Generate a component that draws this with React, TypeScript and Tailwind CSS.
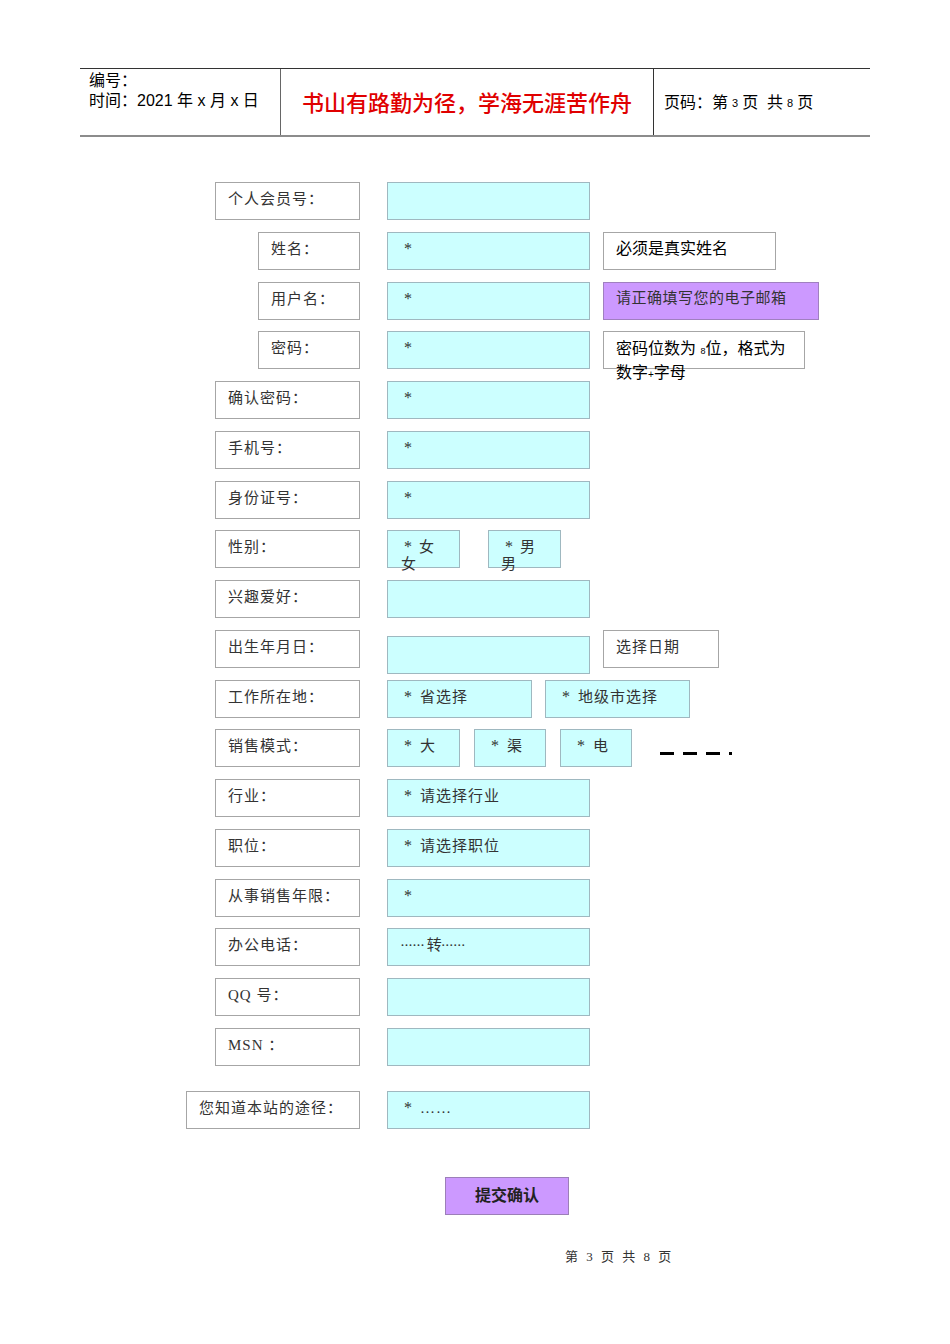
import { ReactNode } from 'react';

const serif = "font-['Liberation_Serif','Noto_Sans_CJK_SC',serif]";
const sans = "font-['Liberation_Sans','Noto_Sans_CJK_SC',sans-serif]";

function Label({ text, w = 'w-[145px]' }: { text: string; w?: string }) {
  return (
    <div className="flex w-[174px] shrink-0 justify-end">
      <div className={`${w} h-[38px] border border-[#a6a6a6] bg-white pl-3 pt-[6px] text-[15px] leading-[20px] tracking-[1px] text-[#333] ${serif}`}>
        {text}
      </div>
    </div>
  );
}

function Star() {
  return <span className="mr-[7px] text-[16px]">*</span>;
}

function Field({ children, w = 'w-[203px]', mt = '' }: { children?: ReactNode; w?: string; mt?: string }) {
  return (
    <div className={`${w} ${mt} h-[38px] shrink-0 border border-[#9fb8c0] bg-[#ccffff] pl-4 pt-[6px] text-[15px] leading-[20px] tracking-[1px] text-[#333] ${serif}`}>
      {children}
    </div>
  );
}

function Row({ children, className = '' }: { children: ReactNode; className?: string }) {
  return <div className={`flex h-[38px] items-start gap-[27px] ${className}`}>{children}</div>;
}

export default function App() {
  return (
    <div className="min-h-[1344px] w-[950px] bg-white">
      {/* header table */}
      <div className="pt-[68px] pl-[80px]">
        <div className="flex h-[69px] w-[790px] border-t border-[#333] border-b-2 border-b-[#8c8c8c]">
          <div className={`w-[201px] border-r border-[#666] pl-[9px] pt-[2px] text-[16px] leading-[20px] text-black ${sans}`}>
            <div>编号：</div>
            <div>时间：2021 年 x 月 x 日</div>
          </div>
          <div className={`flex w-[373px] items-center justify-center border-r border-[#333] pt-[2px] text-[22px] font-medium text-[#e00000] ${sans}`}>
            书山有路勤为径，学海无涯苦作舟
          </div>
          <div className={`flex items-center pl-[10px] pt-[2px] text-[16px] text-black ${sans}`}>
            页码：第<span className="mx-[4px] text-[11px]">3</span>页&nbsp;&nbsp;共<span className="mx-[4px] text-[11px]">8</span>页
          </div>
        </div>
      </div>

      {/* form */}
      <div className="flex flex-col gap-[11.75px] pt-[45px] pl-[186px]">
        <Row>
          <Label text="个人会员号：" />
          <Field />
        </Row>
        <Row>
          <Label text="姓名：" w="w-[102px]" />
          <Field><Star /></Field>
          <div className={`ml-[-14px] h-[38px] w-[173px] border border-[#a6a6a6] pl-3 pt-[6px] text-[16px] leading-[20px] text-black ${sans}`}>
            必须是真实姓名
          </div>
        </Row>
        <Row>
          <Label text="用户名：" w="w-[102px]" />
          <Field><Star /></Field>
          <div className={`ml-[-14px] h-[38px] w-[216px] border border-[#a080c0] bg-[#cc99ff] pl-3 pt-[5px] text-[15px] leading-[20px] tracking-[0.5px] text-[#333] ${sans}`}>
            请正确填写您的电子邮箱
          </div>
        </Row>
        <Row>
          <Label text="密码：" w="w-[102px]" />
          <Field><Star /></Field>
          <div className={`ml-[-14px] h-[38px] w-[202px] border border-[#a6a6a6] pl-3 pt-[6px] text-[16px] leading-[21px] text-black ${sans}`}>
            密码位数为 <span className="text-[9px]">8</span>位，格式为
            <br />
            数字<span className="text-[10px]">+</span>字母
          </div>
        </Row>
        <Row>
          <Label text="确认密码：" />
          <Field><Star /></Field>
        </Row>
        <Row>
          <Label text="手机号：" />
          <Field><Star /></Field>
        </Row>
        <Row>
          <Label text="身份证号：" />
          <Field><Star /></Field>
        </Row>
        <Row>
          <Label text="性别：" />
          <div className="flex gap-[28px]">
            <div className={`relative h-[38px] w-[73px] border border-[#9fb8c0] bg-[#ccffff] pl-4 pt-[6px] text-[15px] leading-[20px] text-[#333] ${serif}`}>
              <Star />女
              <span className="absolute left-[13px] top-[23px]">女</span>
            </div>
            <div className={`relative h-[38px] w-[73px] border border-[#9fb8c0] bg-[#ccffff] pl-4 pt-[6px] text-[15px] leading-[20px] text-[#333] ${serif}`}>
              <Star />男
              <span className="absolute left-[12px] top-[23px]">男</span>
            </div>
          </div>
        </Row>
        <Row>
          <Label text="兴趣爱好：" />
          <Field />
        </Row>
        <Row>
          <Label text="出生年月日：" />
          <Field mt="mt-[6px]" />
          <div className={`ml-[-14px] h-[38px] w-[116px] border border-[#a6a6a6] pl-3 pt-[6px] text-[15px] leading-[20px] tracking-[1px] text-[#333] ${serif}`}>
            选择日期
          </div>
        </Row>
        <Row>
          <Label text="工作所在地：" />
          <div className="flex gap-[13px]">
            <Field w="w-[145px]"><Star />省选择</Field>
            <Field w="w-[145px]"><Star />地级市选择</Field>
          </div>
        </Row>
        <Row>
          <Label text="销售模式：" />
          <div className="flex items-start gap-[14px]">
            <Field w="w-[73px]"><Star />大</Field>
            <Field w="w-[72px]"><Star />渠</Field>
            <Field w="w-[72px]"><Star />电</Field>
            <div className="ml-[14px] mt-[23px] flex items-center gap-[9px]">
              <div className="h-[3px] w-[14px] bg-black" />
              <div className="h-[3px] w-[14px] bg-black" />
              <div className="h-[3px] w-[14px] bg-black" />
              <div className="h-[3px] w-[3px] bg-black" />
            </div>
          </div>
        </Row>
        <Row>
          <Label text="行业：" />
          <Field><Star />请选择行业</Field>
        </Row>
        <Row>
          <Label text="职位：" />
          <Field><Star />请选择职位</Field>
        </Row>
        <Row>
          <Label text="从事销售年限：" />
          <Field><Star /></Field>
        </Row>
        <Row>
          <Label text="办公电话：" />
          <Field>
            <span className="-ml-[4px] tracking-[-1px]">······ 转······</span>
          </Field>
        </Row>
        <Row>
          <Label text="QQ 号：" />
          <Field />
        </Row>
        <Row>
          <Label text="MSN ：" />
          <Field />
        </Row>
        <Row className="mt-[13px]">
          <Label text="您知道本站的途径：" w="w-[174px]" />
          <Field><Star />……</Field>
        </Row>

        <div className="mt-[37px] ml-[259px]">
          <div className={`flex h-[38px] w-[124px] items-center justify-center border border-[#9c7fb8] bg-[#cc99ff] text-[16px] font-bold text-[#222] ${sans}`}>
            提交确认
          </div>
        </div>
      </div>

      <div className={`pt-[32px] pl-[565px] text-[13px] tracking-[2.5px] text-[#333] ${serif}`}>
        第 3 页 共 8 页
      </div>
    </div>
  );
}
